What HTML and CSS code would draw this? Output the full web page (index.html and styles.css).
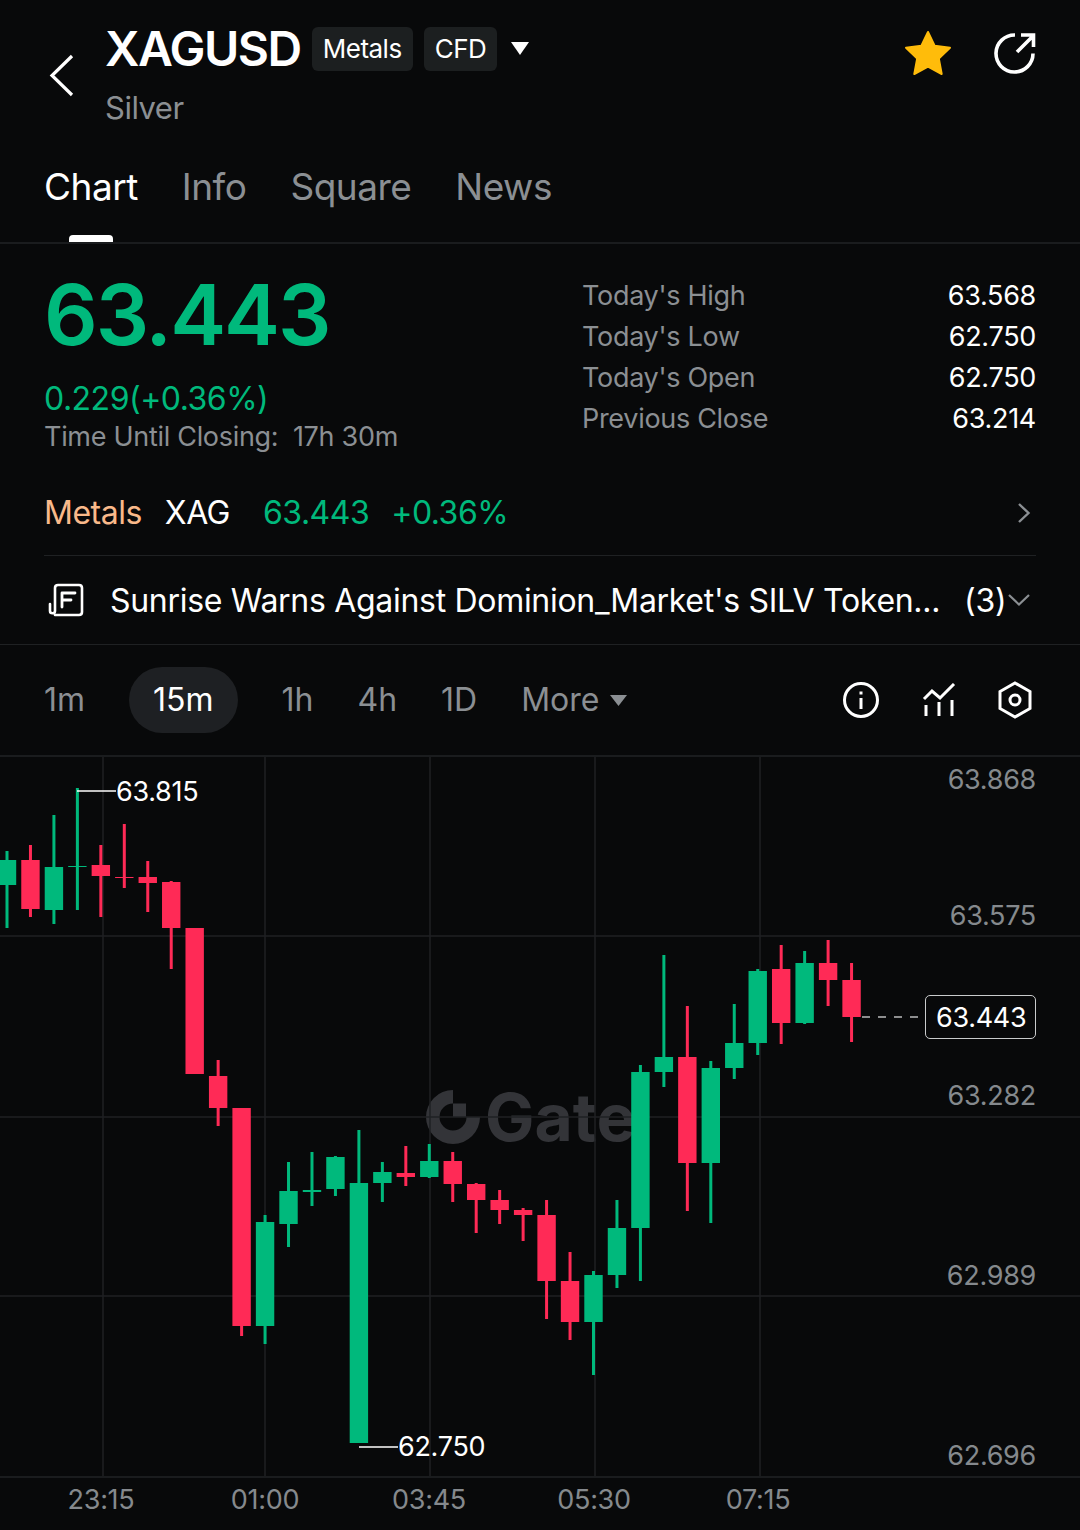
FILE: index.html
```html
<!DOCTYPE html>
<html lang="en">
<head>
    <meta charset="UTF-8">
    <meta name="viewport" content="width=device-width, initial-scale=1.0">
    <title>XAGUSD</title>
    <link rel="stylesheet" href="styles.css">
</head>
<body>

<header class="top">
    <svg class="back" width="28" height="44" viewBox="0 0 28 44"><path d="M24 2 4 21.500 24 41" fill="none" stroke="#fff" stroke-width="3.200"/></svg>
    <div class="title-block">
        <div class="title-row">
            <h1>XAGUSD</h1>
            <span class="tag">Metals</span>
            <span class="tag">CFD</span>
            <svg class="caret" width="18" height="13" viewBox="0 0 18 13"><path d="M0 0H18L9 13Z" fill="#fff"/></svg>
        </div>
        <div class="subtitle">Silver</div>
    </div>
    <div class="top-actions">
        <svg width="48" height="46" viewBox="0 0 48 46"><path d="M24 2 30.600 15.800 46 17.800 34.800 28.500 37.700 44 24 36.500 10.300 44 13.200 28.500 2 17.800 17.400 15.800Z" fill="#ffbc0a" stroke="#ffbc0a" stroke-width="2" stroke-linejoin="round"/></svg>
        <svg width="42" height="42" viewBox="0 0 42 42" fill="none" stroke="#fff" stroke-width="3.600"><path d="M39 21.500A18.500 18.500 0 1 1 21 3"/><path d="M23 20 39 4M27 3H39.500V15"/></svg>
    </div>
</header>

<nav class="tabs">
    <a class="tab active">Chart</a>
    <a class="tab">Info</a>
    <a class="tab">Square</a>
    <a class="tab">News</a>
</nav>

<section class="quote">
    <div class="quote-main">
        <div class="price">63.443</div>
        <div class="change">0.229(+0.36%)</div>
        <div class="closing">Time Until Closing:&nbsp; 17h 30m</div>
    </div>
    <dl class="stats">
        <div class="stat"><dt>Today's High</dt><dd>63.568</dd></div>
        <div class="stat"><dt>Today's Low</dt><dd>62.750</dd></div>
        <div class="stat"><dt>Today's Open</dt><dd>62.750</dd></div>
        <div class="stat"><dt>Previous Close</dt><dd>63.214</dd></div>
    </dl>
</section>

<div class="sector">
    <span class="sector-name">Metals</span>
    <span class="sector-coin">XAG</span>
    <span class="sector-price">63.443</span>
    <span class="sector-pct">+0.36%</span>
    <svg class="chev-right" width="14" height="22" viewBox="0 0 14 22"><path d="M2 2 11.500 11 2 20" fill="none" stroke="#8b8f93" stroke-width="2.400"/></svg>
</div>

<div class="news">
    <svg width="36" height="36" viewBox="0 0 36 36" fill="none" stroke="#fff" stroke-width="2.600" stroke-linecap="round" stroke-linejoin="round"><path d="M2 22V29C2 32 7 32 7 29V6C7 4 8 3 10 3H31C33 3 34 4 34 6V30C34 32 33 33 31 33H7"/><path d="M14 11H27M14 18H23M14 25V11" stroke-width="2.800"/></svg>
    <span class="news-text">Sunrise Warns Against Dominion_Market's SILV Token...</span>
    <span class="news-count">(3)</span>
    <svg class="chev-down" width="24" height="14" viewBox="0 0 24 14"><path d="M2 2 12 11.500 22 2" fill="none" stroke="#8b8f93" stroke-width="2.200"/></svg>
</div>

<div class="periods">
    <a class="period">1m</a>
    <a class="period active">15m</a>
    <a class="period">1h</a>
    <a class="period">4h</a>
    <a class="period">1D</a>
    <a class="period more">More <svg width="17" height="11" viewBox="0 0 17 11"><path d="M0 0H17L8.500 11Z" fill="#8b8f93"/></svg></a>
    <div class="tools">
        <svg width="38" height="38" viewBox="0 0 38 38" fill="none" stroke="#fff" stroke-width="3"><circle cx="19" cy="19" r="16.500"/><path d="M19 17V28"/><path d="M19 10.500V13.500"/></svg>
        <svg width="34" height="34" viewBox="0 0 34 34" fill="none" stroke="#fff" stroke-width="3"><path d="M2 16 10 8 18 15 32 1"/><path d="M4 22V33M17 19V33M30 17V33"/></svg>
        <svg width="34" height="38" viewBox="0 0 34 38" fill="none" stroke="#fff" stroke-width="3"><path d="M17 2 32 10.500V27.500L17 36 2 27.500V10.500Z"/><circle cx="17" cy="19" r="5"/></svg>
    </div>
</div>

<main class="chart" id="chart">
    <div class="watermark">
        <svg width="54" height="54" viewBox="0 0 54 54"><path d="M27 0V13.500A13.500 13.500 0 1 0 40.500 27H54A27 27 0 1 1 27 0Z" fill="#333438"/><path d="M27 13.500H40V27H27Z" fill="#333438"/></svg>
        <span>Gate</span>
    </div>
    <svg class="plot" id="plot" width="1080" height="719" viewBox="0 757 1080 719"></svg>

    <span class="extreme" style="left:116px;top:19px">63.815</span>
    <span class="extreme" style="left:398px;top:674px">62.750</span>

    <span class="axis-y" style="top:7px">63.868</span>
    <span class="axis-y" style="top:143px">63.575</span>
    <span class="axis-y" style="top:323px">63.282</span>
    <span class="axis-y" style="top:503px">62.989</span>
    <span class="axis-y" style="top:683px">62.696</span>

    <span class="last-price">63.443</span>
</main>

<footer class="times">
    <span class="time" style="left:101px">23:15</span>
    <span class="time" style="left:265px">01:00</span>
    <span class="time" style="left:429px">03:45</span>
    <span class="time" style="left:594px">05:30</span>
    <span class="time" style="left:758px">07:15</span>
</footer>

<script src="chart.js"></script>
</body>
</html>
```

FILE: styles.css
```css
* {
    box-sizing: border-box;
}
html, body {
    margin: 0;
    background-color: #08090a;
}
body {
    font-family: Inter, "Liberation Sans", sans-serif;
    color: #fff;
    width: 1080px;
    height: 1530px;
    overflow: hidden;
}
svg {
    display: block;
    flex: none;
}

.top {
    display: flex;
    height: 144px;
    padding: 24px 44px 0 48px;
}
.back {
    margin: 30px 29px 0 0;
}
.title-block {
    flex: 1;
}
.title-row {
    display: flex;
    align-items: center;
    height: 50px;
}
h1 {
    margin: 0 11px 0 0;
    font-size: 48px;
    line-height: 50px;
    font-weight: 600;
    letter-spacing: -1.500px;
}
.tag {
    height: 44px;
    line-height: 44px;
    padding: 0 11px;
    margin-right: 11px;
    background-color: #1c1f20;
    border-radius: 6px;
    font-size: 26px;
    letter-spacing: -0.500px;
}
.caret {
    margin-left: 3px;
    margin-top: -2px;
}
.subtitle {
    margin-top: 14px;
    font-size: 31px;
    line-height: 40px;
    color: #8b8f93;
    letter-spacing: -0.500px;
}
.top-actions {
    display: flex;
    gap: 42px;
    margin-top: 6px;
    height: 46px;
    align-items: center;
}

.tabs {
    display: flex;
    gap: 44px;
    height: 100px;
    padding: 0 44px;
    border-bottom: 2px solid #1a1c1e;
}
.tab {
    position: relative;
    font-size: 37px;
    line-height: 86px;
    color: #8b8f93;
    letter-spacing: -0.500px;
}
.tab.active {
    color: #fff;
}
.tab.active::after {
    content: "";
    position: absolute;
    left: 50%;
    bottom: 0;
    width: 44px;
    height: 7px;
    margin-left: -22px;
    background-color: #fff;
    border-radius: 4px 4px 0 0;
}

.quote {
    display: flex;
    justify-content: space-between;
    height: 226px;
    padding: 26px 44px 0;
}
.price {
    font-size: 84px;
    line-height: 90px;
    font-weight: 600;
    color: #00b97c;
    letter-spacing: -2px;
}
.change {
    margin-top: 19px;
    font-size: 32px;
    line-height: 40px;
    color: #00b97c;
    letter-spacing: -0.500px;
}
.closing {
    margin-top: 0;
    font-size: 27px;
    line-height: 36px;
    color: #8b8f93;
    letter-spacing: -0.300px;
}
.stats {
    width: 454px;
    margin: 5px 0 0;
}
.stat {
    display: flex;
    justify-content: space-between;
    height: 41px;
    line-height: 41px;
    font-size: 27px;
    letter-spacing: -0.300px;
}
.stat dt {
    color: #8b8f93;
}
.stat dd {
    margin: 0;
}

.sector {
    display: flex;
    align-items: center;
    height: 86px;
    margin: 0 44px;
    font-size: 32px;
    letter-spacing: -0.500px;
    border-bottom: 1px solid #1f2123;
}
.sector-name {
    color: #f9b98a;
    margin-right: 23px;
}
.sector-price {
    margin-left: 33px;
    color: #00b97c;
}
.sector-pct {
    margin-left: 22px;
    color: #00b97c;
}
.chev-right {
    margin-left: auto;
    margin-right: 5px;
}

.news {
    display: flex;
    align-items: center;
    height: 89px;
    padding: 0 44px 0 48px;
    font-size: 32px;
    letter-spacing: -0.300px;
    border-bottom: 1px solid #1f2123;
}
.news-text {
    margin-left: 26px;
}
.news-count {
    margin-left: 24px;
}
.chev-down {
    margin-left: auto;
    margin-right: 5px;
}

.periods {
    display: flex;
    align-items: center;
    height: 112px;
    padding: 0 44px;
    font-size: 32px;
    color: #8b8f93;
    border-bottom: 2px solid #1a1c1e;
}
.period {
    line-height: 66px;
    margin-right: 44px;
}
.period.active {
    padding: 0 24px;
    background-color: #1e2023;
    border-radius: 33px;
    color: #fff;
}
.period.more {
    display: flex;
    align-items: center;
    gap: 11px;
}
.tools {
    display: flex;
    align-items: center;
    gap: 42px;
    margin-left: auto;
    margin-right: 4px;
}

.chart {
    position: relative;
    height: 719px;
}
.plot {
    position: absolute;
    left: 0;
    top: 0;
}
.watermark {
    position: absolute;
    left: 426px;
    top: 333px;
    display: flex;
    align-items: center;
    gap: 5px;
    font-size: 66px;
    line-height: 54px;
    font-weight: 700;
    color: #333438;
}
.extreme {
    position: absolute;
    font-size: 27px;
    line-height: 32px;
    letter-spacing: -0.300px;
}
.axis-y {
    position: absolute;
    right: 44px;
    font-size: 27px;
    line-height: 32px;
    color: #85898d;
    letter-spacing: -0.300px;
}
.last-price {
    position: absolute;
    left: 925px;
    top: 238px;
    width: 111px;
    height: 44px;
    padding-left: 10px;
    line-height: 44px;
    font-size: 27px;
    letter-spacing: -0.300px;
    background-color: #08090a;
    border: 1px solid #c9cbcc;
    border-radius: 5px;
}

.times {
    position: relative;
    height: 54px;
    border-top: 2px solid #1a1c1e;
}
.time {
    position: absolute;
    top: 4px;
    transform: translateX(-50%);
    font-size: 27px;
    line-height: 36px;
    color: #85898d;
    letter-spacing: -0.300px;
}
```

FILE: chart.js
```js
const GREEN = '#00b97c';
const RED = '#ff2a56';
const GRID = '#1f2123';
const START = 7;
const STEP = 23.46;
const WIDTH = 18.4;

// [colour, wick top, wick bottom, body top, body bottom]
const candles = [
    ['g', 851, 928, 860, 885], ['r', 845, 917, 860, 909], ['g', 815, 924, 867, 910],
    ['g', 788, 910, 866, 867], ['r', 845, 917, 865, 876], ['r', 824, 888, 877, 878],
    ['r', 861, 912, 877, 883], ['r', 881, 969, 882, 928], ['r', 928, 1074, 928, 1074],
    ['r', 1060, 1126, 1076, 1108], ['r', 1108, 1336, 1108, 1326], ['g', 1215, 1344, 1222, 1326],
    ['g', 1162, 1247, 1191, 1224], ['g', 1152, 1206, 1190, 1192], ['g', 1156, 1196, 1157, 1189],
    ['g', 1130, 1443, 1183, 1443], ['g', 1162, 1202, 1172, 1183], ['r', 1146, 1186, 1173, 1177],
    ['g', 1144, 1178, 1161, 1177], ['r', 1152, 1202, 1161, 1184], ['r', 1183, 1233, 1184, 1200],
    ['r', 1190, 1224, 1200, 1210], ['r', 1208, 1241, 1210, 1215], ['r', 1200, 1319, 1215, 1281],
    ['r', 1252, 1340, 1281, 1322], ['g', 1271, 1375, 1275, 1322], ['g', 1200, 1288, 1228, 1275],
    ['g', 1065, 1281, 1072, 1228], ['g', 955, 1087, 1057, 1072], ['r', 1006, 1211, 1057, 1163],
    ['g', 1061, 1223, 1068, 1163], ['g', 1004, 1079, 1043, 1068], ['g', 969, 1055, 971, 1043],
    ['r', 945, 1044, 969, 1023], ['g', 951, 1024, 963, 1023], ['r', 940, 1006, 963, 980],
    ['r', 963, 1042, 980, 1017]
];

const plot = document.getElementById('plot');

function add(name, attrs) {
    const el = document.createElementNS('http://www.w3.org/2000/svg', name);
    for (const key in attrs) el.setAttribute(key, attrs[key]);
    plot.appendChild(el);
}

function line(x1, y1, x2, y2, stroke, width) {
    add('line', { x1, y1, x2, y2, stroke, 'stroke-width': width });
}

[936, 1117, 1296].forEach(y => line(0, y, 1080, y, GRID, 1.5));
[103, 265, 430, 595, 760].forEach(x => line(x, 757, x, 1476, GRID, 1.5));

candles.forEach((c, i) => {
    const x = START + i * STEP;
    const fill = c[0] === 'g' ? GREEN : RED;
    add('rect', { x: x - 1.5, y: c[1], width: 3, height: c[2] - c[1], fill });
    add('rect', { x: x - WIDTH / 2, y: c[3], width: WIDTH, height: c[4] - c[3], fill });
});

// markers for the high, the low and the last price
line(77, 791, 116, 791, '#fff', 1.5);
line(359, 1447, 398, 1447, '#fff', 1.5);
add('line', { x1: 862, y1: 1017, x2: 925, y2: 1017, stroke: '#b9bbbc', 'stroke-width': 1.5, 'stroke-dasharray': '8 8' });
```
